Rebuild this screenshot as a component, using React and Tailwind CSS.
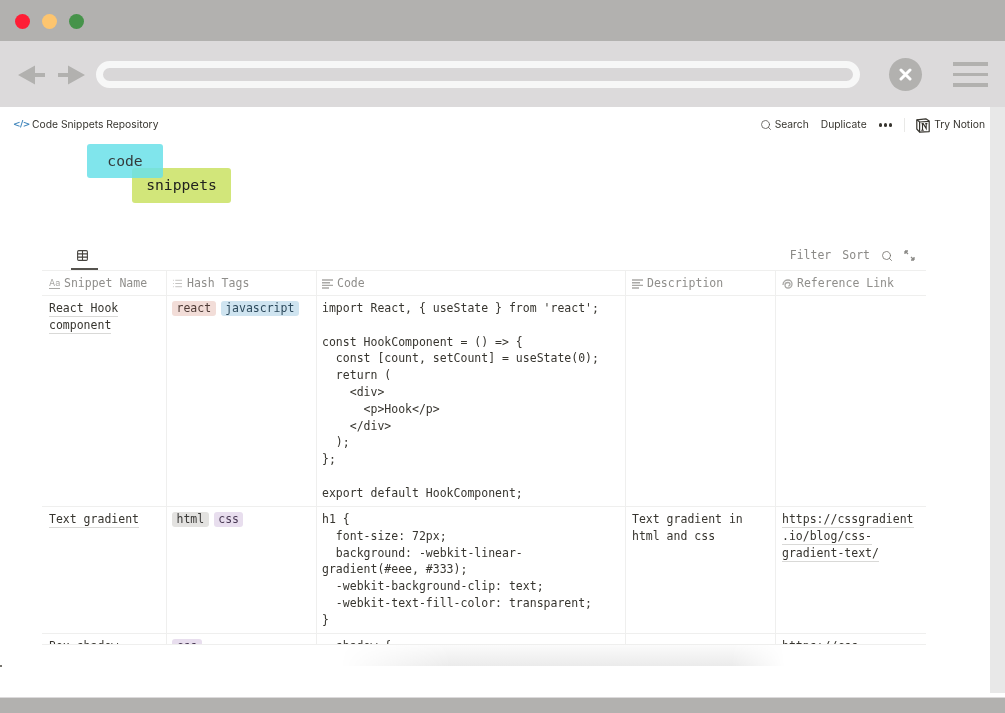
import React from 'react';
import { Search, Table, List } from 'lucide-react';

const mono = "font-['DejaVu_Sans_Mono',monospace]";

const hookCode = `import React, { useState } from 'react';

const HookComponent = () => {
  const [count, setCount] = useState(0);
  return (
    <div>
      <p>Hook</p>
    </div>
  );
};

export default HookComponent;`;

const gradientCode = `h1 {
  font-size: 72px;
  background: -webkit-linear-gradient(#eee, #333);
  -webkit-background-clip: text;
  -webkit-text-fill-color: transparent;
}`;

function Tag({ className, children }) {
  return <span className={`rounded-[3px] px-[4.5px] h-[15px] leading-[15px] ${className}`}>{children}</span>;
}

function LinkText({ children }) {
  return <span className="border-b border-[#d9d9d7] pb-[1px]">{children}</span>;
}

function LinesIcon() {
  return (
    <svg width="11" height="10" viewBox="0 0 11 10" className="shrink-0">
      <path d="M0 1 H11 M0 3.7 H8 M0 6.4 H11 M0 9 H7" stroke="#a9a8a5" strokeWidth="1.4" fill="none" />
    </svg>
  );
}

function HeaderCell({ icon, label, last, pad }) {
  return (
    <div className={`flex items-center gap-[4px] pt-[1px] text-[#8f8e8b] ${pad} ${last ? '' : 'border-r border-[#efefee]'}`}>
      {icon}
      <span>{label}</span>
    </div>
  );
}

function Cell({ children, last, pad, className = '' }) {
  return (
    <div className={`pr-[7px] pt-[4px] leading-[16.8px] ${pad} ${last ? '' : 'border-r border-[#efefee]'} ${className}`}>
      {children}
    </div>
  );
}

function BrowserChrome() {
  return (
    <>
      <div className="h-[41px] shrink-0 bg-[#b2b1af] flex items-center gap-[12px] pl-[15px] pt-[1px]">
        <span className="w-[15px] h-[15px] rounded-full bg-[#ff1d35]" />
        <span className="w-[15px] h-[15px] rounded-full bg-[#fdc56f]" />
        <span className="w-[15px] h-[15px] rounded-full bg-[#46934a]" />
      </div>
      <div className="h-[66px] shrink-0 bg-[#dcdadb] flex items-center pl-[18px] pt-[1px]">
        <svg width="28" height="20" viewBox="0 0 28 20" className="shrink-0">
          <path d="M0 10 L17 0.5 V8 H27 V12 H17 V19.5 Z" fill="#b2b1af" />
        </svg>
        <svg width="28" height="20" viewBox="0 0 28 20" className="shrink-0 ml-[11px]">
          <path d="M28 10 L11 0.5 V8 H1 V12 H11 V19.5 Z" fill="#b2b1af" />
        </svg>
        <div className="ml-[11px] w-[764px] h-[27px] rounded-full border-[7px] border-[#f7f7f7] bg-[#d9d7d8]" />
        <div className="ml-[29px] w-[33px] h-[33px] rounded-full bg-[#b2b1af] flex items-center justify-center">
          <svg width="13" height="13" viewBox="0 0 13 13">
            <path d="M2 2 L11 11 M11 2 L2 11" stroke="#fff" strokeWidth="3" strokeLinecap="round" />
          </svg>
        </div>
        <div className="ml-[31px] w-[35px] flex flex-col gap-[7px]">
          <span className="h-[3.5px] bg-[#b2b1af]" />
          <span className="h-[3.5px] bg-[#b2b1af]" />
          <span className="h-[3.5px] bg-[#b2b1af]" />
        </div>
      </div>
    </>
  );
}

function TopBar() {
  return (
    <div className="h-[36px] flex items-center justify-between pl-[13px] pr-[5px] text-[10.3px] text-[#37352f] font-['Inter',sans-serif]">
      <div className="flex items-center gap-[5px]">
        <span className="text-[9px] font-semibold tracking-[-0.6px] text-[#3f85bb] font-['DejaVu_Sans',sans-serif] w-[14px]">&lt;/&gt;</span>
        <span>Code Snippets Repository</span>
      </div>
      <div className="flex items-center">
        <Search size={12} strokeWidth={1.6} className="text-[#55534e]" />
        <span className="ml-[3px]">Search</span>
        <span className="ml-[12px]">Duplicate</span>
        <span className="ml-[12px] flex gap-[1.5px]">
          <i className="w-[3.5px] h-[3.5px] rounded-full bg-[#37352f]" />
          <i className="w-[3.5px] h-[3.5px] rounded-full bg-[#37352f]" />
          <i className="w-[3.5px] h-[3.5px] rounded-full bg-[#37352f]" />
        </span>
        <span className="ml-[12px] w-px h-[14px] bg-[#e9e9e7]" />
        <svg width="14" height="15" viewBox="0 0 14 15" className="ml-[11px]">
          <path d="M0.8 1.8 L9.8 0.8 L13.2 3 V13.6 L3.6 14.2 L0.8 11 Z" fill="#fff" stroke="#37352f" strokeWidth="1.2" strokeLinejoin="round" />
          <path d="M0.8 1.8 L3.6 4 L13.2 3.4 M3.6 4 V14.2" fill="none" stroke="#37352f" strokeWidth="1.2" />
          <path d="M5.6 5.6 H7.2 L10.2 10.6 V5.6 M9.2 5.6 H11.4 M5.2 12.2 H7.8 M6.5 12.2 V5.6" fill="none" stroke="#37352f" strokeWidth="1.1" />
        </svg>
        <span className="ml-[4px]">Try Notion</span>
      </div>
    </div>
  );
}

function Logo() {
  return (
    <div className={`ml-[87px] mt-[1px] text-[14.7px] text-[#22231f] ${mono}`}>
      <div className="relative z-10 w-[76px] h-[34px] rounded-[3px] bg-[#6ae1e9]/85 flex items-center justify-center text-[#33393a]">code</div>
      <div className="ml-[45px] -mt-[10px] w-[99px] h-[35px] rounded-[3px] bg-[#d2e67a] flex items-center justify-center">snippets</div>
    </div>
  );
}

function ViewBar() {
  return (
    <div className="mt-[39px] ml-[42px] w-[884px] h-[28px] flex items-start justify-between text-[11.5px] text-[#8a8986]">
      <div className="ml-[29px] w-[27px] h-[28px] border-b-2 border-[#55534e] flex justify-center pt-[7px] pr-[4px]">
        <Table size={13} strokeWidth={2} className="text-[#45433e]" />
      </div>
      <div className="flex items-center h-[24px] pt-[3px] pr-[11px]">
        <span>Filter</span>
        <span className="ml-[11px]">Sort</span>
        <Search size={12} strokeWidth={1.7} className="ml-[11px] text-[#77756f]" />
        <svg width="11" height="11" viewBox="0 0 11 11" className="ml-[11px]">
          <path d="M1 1 L4 4 M1 1 H4 M1 1 V4 M7 7 L10 10 M10 10 H7 M10 10 V7" fill="none" stroke="#8a8986" strokeWidth="1.3" />
        </svg>
      </div>
    </div>
  );
}

function SnippetTable() {
  const gridCols = 'grid grid-cols-[125px_150px_309px_150px_150px]';
  return (
    <div className="ml-[42px] w-[884px] h-[374px] overflow-hidden border-t border-[#efefee] text-[11.5px] text-[#37352f]">
      <div className={`${gridCols} h-[25px] border-b border-[#efefee]`}>
        <HeaderCell
          pad="pl-[7px]"
          label="Snippet Name"
          icon={<span className="w-[11px] text-[9px] leading-[10px] border-b border-[#a9a8a5] text-[#a9a8a5] font-['Inter',sans-serif] shrink-0">Aa</span>}
        />
        <HeaderCell pad="pl-[5px]" label="Hash Tags" icon={<List size={11} strokeWidth={1.5} className="text-[#a9a8a5]" />} />
        <HeaderCell pad="pl-[5px]" label="Code" icon={<LinesIcon />} />
        <HeaderCell pad="pl-[6px]" label="Description" icon={<LinesIcon />} />
        <HeaderCell
          last
          pad="pl-[6px]"
          label="Reference Link"
          icon={
            <svg width="11" height="10" viewBox="0 0 11 10" className="shrink-0">
              <path d="M1 6 C1 2.5 3.5 1 6 1 C8.5 1 10 3 10 5 C10 7.5 8 9 6 9 C4 9 3 7.5 3 6 C3 4.5 4.5 3.5 6 3.5 C7.2 3.5 8 4.5 8 5.5 C8 6.3 7.2 7 6.3 7" fill="none" stroke="#a9a8a5" strokeWidth="1.3" />
            </svg>
          }
        />
      </div>

      <div className={`${gridCols} h-[211px] border-b border-[#efefee]`}>
        <Cell pad="pl-[7px]">
          <LinkText>React Hook</LinkText>
          <br />
          <LinkText>component</LinkText>
        </Cell>
        <Cell pad="pl-[5px]">
          <div className="flex gap-[5px] pt-[1px]">
            <Tag className="bg-[#f2ddd8] text-[#4d3a35]">react</Tag>
            <Tag className="bg-[#cfe4f0] text-[#2d4a5c]">javascript</Tag>
          </div>
        </Cell>
        <Cell pad="pl-[5px]" className="whitespace-pre-wrap">{hookCode}</Cell>
        <Cell pad="pl-[6px]" />
        <Cell last pad="pl-[6px]" />
      </div>

      <div className={`${gridCols} h-[127px] border-b border-[#efefee]`}>
        <Cell pad="pl-[7px]">
          <LinkText>Text gradient</LinkText>
        </Cell>
        <Cell pad="pl-[5px]">
          <div className="flex gap-[5px] pt-[1px]">
            <Tag className="bg-[#e3e2e0] text-[#3a3937]">html</Tag>
            <Tag className="bg-[#e8deee] text-[#4a3a55]">css</Tag>
          </div>
        </Cell>
        <Cell pad="pl-[5px]" className="whitespace-pre-wrap">{gradientCode}</Cell>
        <Cell pad="pl-[6px]">Text gradient in<br />html and css</Cell>
        <Cell last pad="pl-[6px]">
          <LinkText>https://cssgradient</LinkText>
          <br />
          <LinkText>.io/blog/css-</LinkText>
          <br />
          <LinkText>gradient-text/</LinkText>
        </Cell>
      </div>

      <div className={`${gridCols} h-[30px]`}>
        <Cell pad="pl-[7px]">Box-shadow</Cell>
        <Cell pad="pl-[5px]">
          <div className="flex pt-[1px]">
            <Tag className="bg-[#e8deee] text-[#4a3a55]">css</Tag>
          </div>
        </Cell>
        <Cell pad="pl-[5px]" className="whitespace-pre"> -shadow {'{'}</Cell>
        <Cell pad="pl-[6px]" />
        <Cell last pad="pl-[6px]">https://css</Cell>
      </div>
    </div>
  );
}

export default function App() {
  return (
    <div className={`w-[1005px] h-[713px] overflow-hidden flex flex-col bg-white blur-[0.3px] ${mono}`}>
      <BrowserChrome />
      <div className="flex-1 flex min-h-0 relative">
        <div className="flex-1 min-w-0">
          <TopBar />
          <Logo />
          <ViewBar />
          <SnippetTable />
          <div className="ml-[42px] w-[884px] border-t border-[#efefee]" />
          {/* fake shadow under the table */}
          <div className="ml-[340px] w-[445px] h-[21px] bg-gradient-to-b from-[#fbfbfb] to-[#ebebeb] [mask-image:linear-gradient(to_right,transparent,black_25%,black_88%,transparent)]" />
        </div>
        <div className="w-[15px] shrink-0 h-[586px] bg-[#e8e8e8]" />
        <span className="absolute left-0 top-[558px] w-[2px] h-[2px] bg-[#77756f]" />
      </div>
      <div className="h-[16px] shrink-0 bg-[#b2b1af] border-t border-[#dcdadb]" />
    </div>
  );
}
